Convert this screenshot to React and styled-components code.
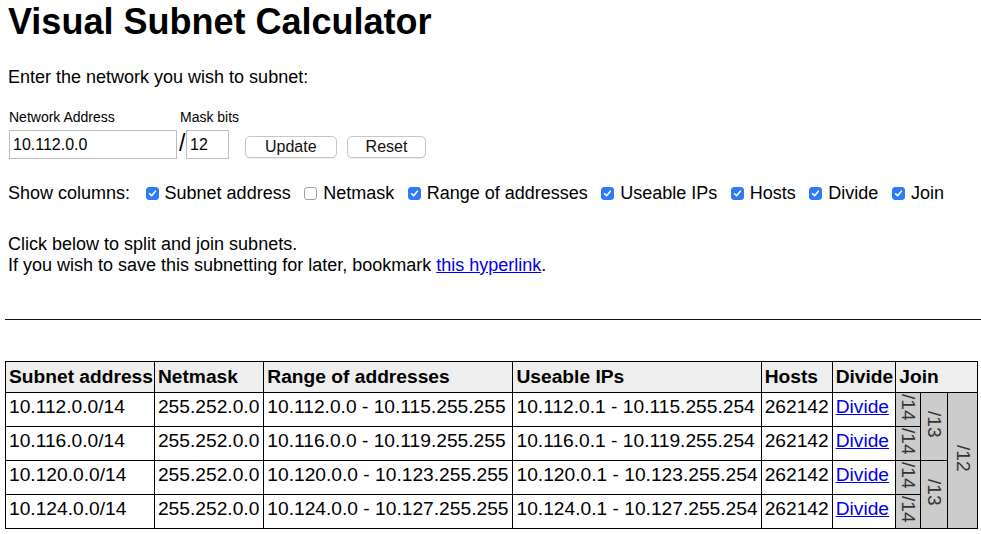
import React from "react";
import styled, { createGlobalStyle } from "styled-components";

const GlobalStyle = createGlobalStyle`
  body {
    margin: 0;
    padding: 0 0 0 8px;
    background: #fff;
    color: #000;
    font-family: "Liberation Sans", Arial, sans-serif;
    font-size: 18px;
  }
`;

const Title = styled.h1`
  margin: 1px 0 0;
  font-size: 36px;
  line-height: 41px;
  font-weight: bold;
`;

const Text = styled.p`
  margin: ${(props) => props.$top}px 0 0;
  line-height: 21px;
`;

const SubnetForm = styled.form`
  display: grid;
  grid-template-columns: 170px max-content;
  grid-template-rows: 16px 29px;
  justify-content: start;
  row-gap: 5px;
  margin: 21px 0 0 1px;
`;

const FieldLabel = styled.label`
  font-size: 14px;
  line-height: 16px;
  padding-left: ${(props) => props.$indent || 0}px;
`;

const MaskField = styled.div`
  display: flex;
  align-items: center;
`;

const Slash = styled.span`
  font-size: 23px;
  line-height: 29px;
  width: 7px;
  margin-top: -2px;
`;

const TextInput = styled.input`
  box-sizing: border-box;
  width: ${(props) => props.$width}px;
  height: 29px;
  padding: 0 3px;
  border: 1px solid #bdbdbd;
  border-radius: 0;
  font-family: "Liberation Sans", Arial, sans-serif;
  font-size: 16px;
  color: #000;
  outline: none;
`;

const Buttons = styled.div`
  display: flex;
  align-self: flex-end;
  gap: 10px;
  margin: 0 0 1px 16px;
`;

const Button = styled.button`
  box-sizing: border-box;
  height: 22px;
  padding: 0 ${(props) => props.$pad}px;
  background: #fff;
  border: 1px solid #c6c6c6;
  border-radius: 5px;
  box-shadow: 0 1px 1px rgba(0, 0, 0, 0.08);
  font-family: "Liberation Sans", Arial, sans-serif;
  font-size: 16px;
  color: #111;
`;

const ColumnsRow = styled.div`
  display: flex;
  align-items: center;
  gap: 13.5px;
  margin-top: 24px;
  line-height: 21px;
`;

const ColumnsCaption = styled.span`
  margin-right: 2px;
`;

const ColumnOption = styled.label`
  display: flex;
  align-items: center;
  gap: 6px;
`;

const Box = styled.span`
  box-sizing: border-box;
  display: inline-flex;
  align-items: center;
  justify-content: center;
  width: 13px;
  height: 13px;
  border-radius: 3px;
  background: ${(props) => (props.$checked ? "#2f7bf5" : "#fff")};
  border: 1px solid ${(props) => (props.$checked ? "#2f7bf5" : "#a0a0a0")};
`;

const Link = styled.a`
  color: #0000ee;
  text-decoration: underline;
`;

const Rule = styled.hr`
  margin: 43px 0 0 -3px;
  border: 0;
  border-top: 1px solid #111;
  height: 0;
`;

const CalcTable = styled.table`
  margin: 41px 0 0 -3px;
  border-collapse: collapse;
  font-size: 19.2px;
`;

const HeadCell = styled.th`
  padding: 0 ${(props) => props.$right ?? 1}px 0 3px;
  border: 1px solid #000;
  background: #eee;
  text-align: left;
  line-height: 30px;
  font-weight: bold;
  white-space: nowrap;
`;

const Cell = styled.td`
  padding: 3px ${(props) => props.$right ?? 3}px 8px 3px;
  border: 1px solid #000;
  line-height: 22px;
  vertical-align: top;
  white-space: nowrap;
`;

const JoinCell = styled.td`
  width: ${(props) => props.$width}px;
  padding: 0;
  border: 1px solid #000;
  background: #ccc;
  text-align: center;
  vertical-align: middle;
`;

const VerticalLabel = styled.span`
  display: inline-block;
  writing-mode: vertical-rl;
  line-height: 22px;
  color: #333;
`;

const CheckMark = () => (
  <svg width="9" height="9" viewBox="0 0 9 9">
    <path
      d="M1.6 4.8 L3.6 6.8 L7.4 2.2"
      fill="none"
      stroke="#fff"
      strokeWidth="1.6"
      strokeLinecap="round"
      strokeLinejoin="round"
    />
  </svg>
);

const columns = [
  { name: "Subnet address", checked: true },
  { name: "Netmask", checked: false },
  { name: "Range of addresses", checked: true },
  { name: "Useable IPs", checked: true },
  { name: "Hosts", checked: true },
  { name: "Divide", checked: true },
  { name: "Join", checked: true },
];

const subnets = [
  { base: 112, end: 115, joins: [{ label: "/13", span: 2, width: 26 }, { label: "/12", span: 4, width: 29 }] },
  { base: 116, end: 119, joins: [] },
  { base: 120, end: 123, joins: [{ label: "/13", span: 2, width: 26 }] },
  { base: 124, end: 127, joins: [] },
];

const App = () => {
  return (
    <>
      <GlobalStyle />
      <Title>Visual Subnet Calculator</Title>
      <Text $top={25}>Enter the network you wish to subnet:</Text>

      <SubnetForm onSubmit={(e) => e.preventDefault()}>
        <FieldLabel>Network Address</FieldLabel>
        <FieldLabel $indent={1}>Mask bits</FieldLabel>
        <TextInput $width={168} defaultValue="10.112.0.0" />
        <MaskField>
          <Slash>/</Slash>
          <TextInput $width={43} defaultValue="12" />
          <Buttons>
            <Button type="button" $pad={19}>Update</Button>
            <Button type="button" $pad={18}>Reset</Button>
          </Buttons>
        </MaskField>
      </SubnetForm>

      <ColumnsRow>
        <ColumnsCaption>Show columns:</ColumnsCaption>
        {columns.map((col) => (
          <ColumnOption key={col.name}>
            <Box $checked={col.checked}>{col.checked && <CheckMark />}</Box>
            {col.name}
          </ColumnOption>
        ))}
      </ColumnsRow>

      <Text $top={30}>
        Click below to split and join subnets.
        <br />
        If you wish to save this subnetting for later, bookmark{" "}
        <Link href="#">this hyperlink</Link>.
      </Text>

      <Rule />

      <CalcTable>
        <thead>
          <tr>
            <HeadCell>Subnet address</HeadCell>
            <HeadCell>Netmask</HeadCell>
            <HeadCell>Range of addresses</HeadCell>
            <HeadCell>Useable IPs</HeadCell>
            <HeadCell>Hosts</HeadCell>
            <HeadCell $right={2}>Divide</HeadCell>
            <HeadCell colSpan={3}>Join</HeadCell>
          </tr>
        </thead>
        <tbody>
          {subnets.map((s) => (
            <tr key={s.base}>
              <Cell>10.{s.base}.0.0/14</Cell>
              <Cell $right={4}>255.252.0.0</Cell>
              <Cell $right={4}>
                10.{s.base}.0.0 - 10.{s.end}.255.255
              </Cell>
              <Cell>
                10.{s.base}.0.1 - 10.{s.end}.255.254
              </Cell>
              <Cell>262142</Cell>
              <Cell>
                <Link href="#">Divide</Link>
              </Cell>
              <JoinCell $width={24}>
                <VerticalLabel>/14</VerticalLabel>
              </JoinCell>
              {s.joins.map((j) => (
                <JoinCell key={j.label} rowSpan={j.span} $width={j.width}>
                  <VerticalLabel>{j.label}</VerticalLabel>
                </JoinCell>
              ))}
            </tr>
          ))}
        </tbody>
      </CalcTable>
    </>
  );
};

export default App;
